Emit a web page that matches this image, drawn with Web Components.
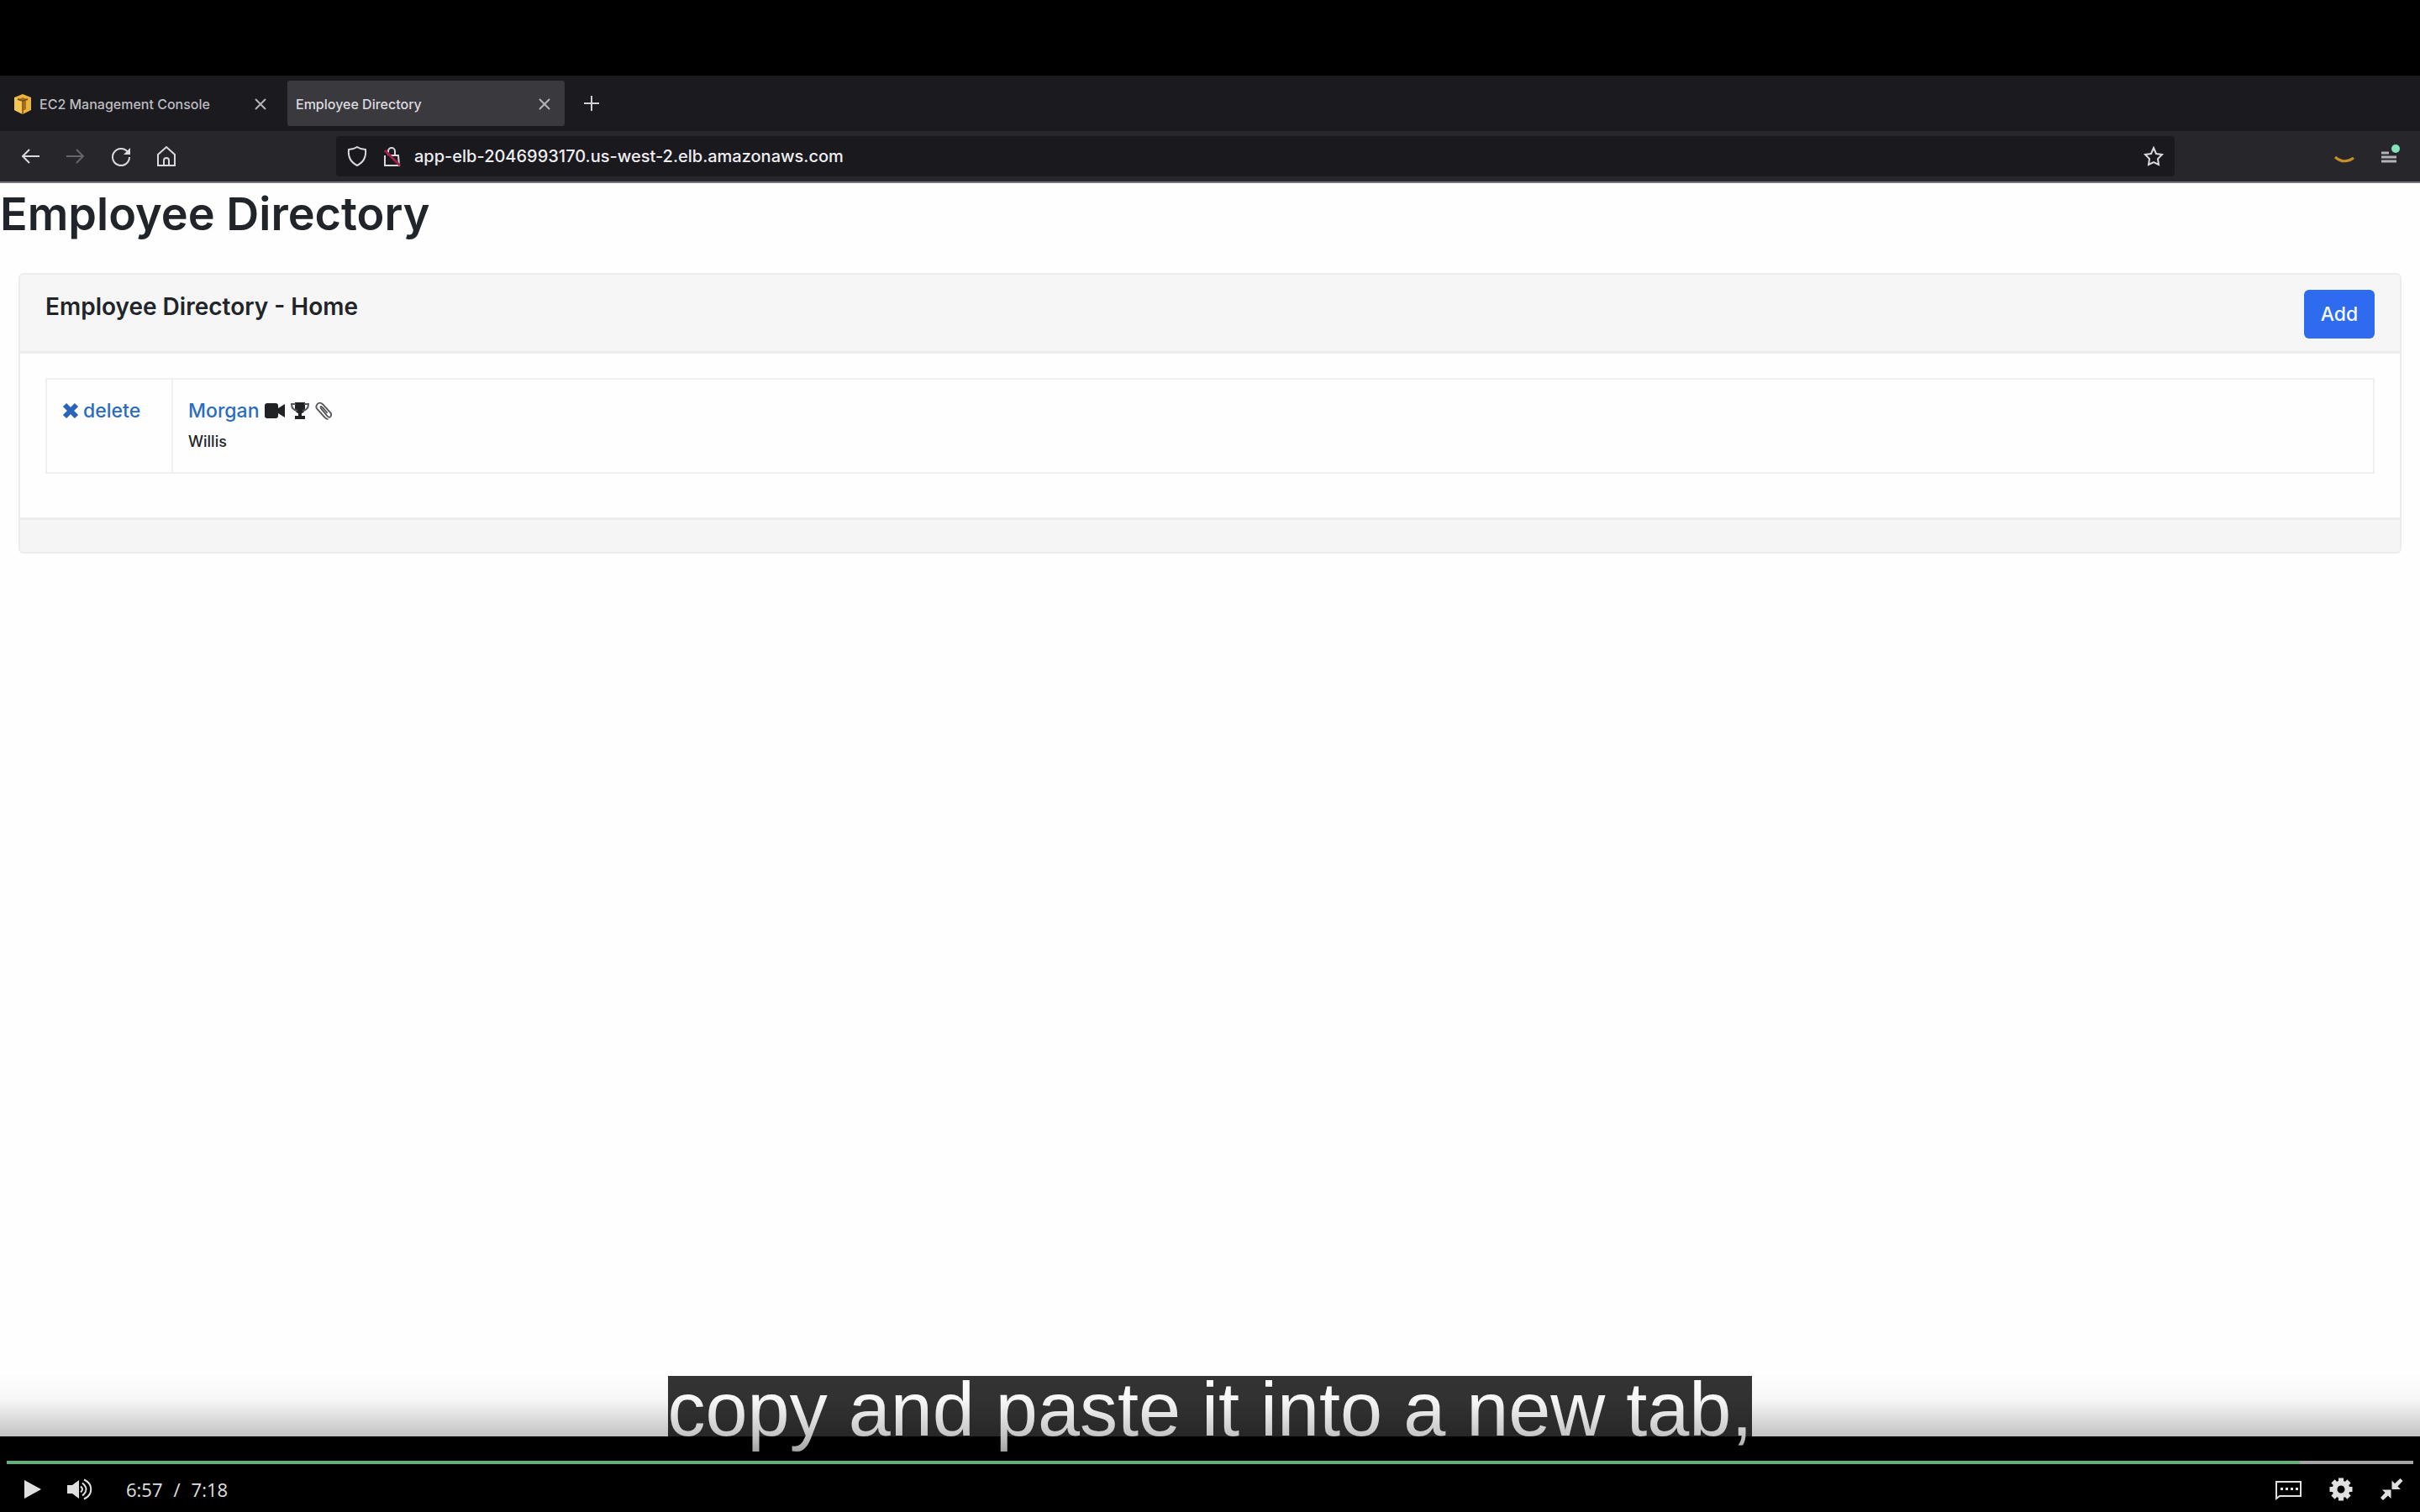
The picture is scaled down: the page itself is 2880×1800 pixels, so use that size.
<!DOCTYPE html>
<html lang="en">
<head>
<meta charset="utf-8">
<title>Employee Directory</title>
<style>
html,body{margin:0;background:#000}
body{font-family:Inter,"Liberation Sans",sans-serif}
</style>
</head>
<body>
<video-player>
  <browser-tabs slot="screen"></browser-tabs>
  <browser-toolbar slot="screen"></browser-toolbar>
  <directory-page slot="screen">
    <employee-card></employee-card>
  </directory-page>
  <caption-line slot="caption">copy and paste it into a new tab,</caption-line>
  <player-controls slot="controls"></player-controls>
</video-player>
<script>
const define = (name, html) => customElements.define(name, class extends HTMLElement {
  constructor() {
    super();
    this.attachShadow({ mode: "open" }).innerHTML = `<style>
      :host,*{box-sizing:border-box}
      button{font:inherit;color:inherit;background:none;border:0;padding:0;margin:0;display:flex;align-items:center;justify-content:center}
      a{text-decoration:none}
      svg{display:block}
    </style>` + html;
  }
});

define("video-player", `
<style>
:host{display:flex;flex-direction:column;min-height:100vh;background:#000;position:relative;overflow:hidden}
.screen{margin-top:90px;flex:1;background:#fefefe;display:flex;flex-direction:column}
.shade{position:absolute;left:0;right:0;bottom:0;height:166px;pointer-events:none;
  background:linear-gradient(rgba(0,0,0,0),rgba(0,0,0,.03) 32px,rgba(0,0,0,.11) 50px,rgba(0,0,0,.235) 76px,rgba(0,0,0,.36) 94px,rgba(0,0,0,.4))}
.caption{position:absolute;left:0;right:0;bottom:82px;display:flex;justify-content:center}
.controls{height:90px}
</style>
<div class="screen"><slot name="screen"></slot></div>
<div class="controls"></div>
<div class="caption"><slot name="caption"></slot></div>
<div class="shade"></div>
<slot name="controls"></slot>`);

define("browser-tabs", `
<style>
:host{display:flex;align-items:center;height:66px;background:#1b1a1f;color:#bdbcc1;font-size:16px;line-height:24px;font-weight:500}
.tab{display:flex;align-items:center;height:54px;width:330px;padding:2px 14px 0 10px;border-radius:3px}
.tab.first{width:342px;padding:2px 22px 0 15px;gap:8px}
.tab.on{background:#3a393e;color:#dddce0}
.tab span{flex:1}
.new{margin-left:22px}
</style>
<div class="tab first" role="tab">
  <svg width="24" height="26" viewBox="0 0 24 26"><path d="M12 1 22 5v15l-10 5L2 20V5z" fill="#e9b33c"/><path d="M8 7l4-2 4 2v12l-4 2-4-2z" fill="#a66d1c"/><path d="M2 5l10 3v17L2 20z" fill="#f3c653"/><path d="M12 8v17" stroke="#976318" stroke-width="2"/><path d="M6 7l6 2 6-2" stroke="#7b521b" stroke-width="2" fill="none"/></svg>
  <span>EC2 Management Console</span>
  <button aria-label="Close tab"><svg width="20" height="20" viewBox="0 0 20 20"><path d="M4 4l12 12M16 4 4 16" stroke="#b5b4b9" stroke-width="2"/></svg></button>
</div>
<div class="tab on" role="tab" aria-selected="true">
  <span>Employee Directory</span>
  <button aria-label="Close tab"><svg width="20" height="20" viewBox="0 0 20 20"><path d="M4 4l12 12M16 4 4 16" stroke="#b5b4b9" stroke-width="2"/></svg></button>
</div>
<button class="new" aria-label="New tab"><svg width="20" height="20" viewBox="0 0 20 20"><path d="M10 1v18M1 10h18" stroke="#d0cfd4" stroke-width="2"/></svg></button>`);

define("browser-toolbar", `
<style>
:host{display:flex;align-items:center;height:62px;background:#27262b;border-bottom:2px solid #77767a;padding:0 22px;color:#dad9dd}
.nav{display:flex;gap:26px;width:378px}
.url{flex:1;display:flex;align-items:center;height:48px;background:#1a191e;border-radius:4px;padding:0 11px;gap:13px}
input{flex:1;border:0;outline:0;background:none;color:#efeef2;font:500 20px/28px Inter,"Liberation Sans",sans-serif;padding:0}
.right{display:flex;width:270px;justify-content:flex-end;gap:26px;align-items:center}
svg{fill:none;stroke:currentColor;stroke-width:2}
</style>
<div class="nav">
  <button aria-label="Back"><svg width="28" height="28" viewBox="0 0 28 28"><path d="M25 14H5M13 6l-8 8 8 8"/></svg></button>
  <button aria-label="Forward"><svg width="28" height="28" viewBox="0 0 28 28" style="color:#67666b"><path d="M3 14h20M15 6l8 8-8 8"/></svg></button>
  <button aria-label="Reload"><svg width="28" height="28" viewBox="0 0 28 28"><path d="M22 9A10 10 0 1 0 24 15"/><path d="M25 4v8h-8z" fill="currentColor" stroke="none"/></svg></button>
  <button aria-label="Home"><svg width="28" height="28" viewBox="0 0 28 28"><path d="M4 12 14 3l10 9v13H4z"/><path d="M11 25v-6a3 3 0 0 1 6 0v6"/></svg></button>
</div>
<div class="url">
  <svg width="28" height="28" viewBox="0 0 28 28"><path d="M14 3c3 2 6 3 10 3 1 9-2 15-10 19C6 21 3 15 4 6c4 0 7-1 10-3z"/></svg>
  <svg width="28" height="28" viewBox="0 0 28 28"><path d="M10 13V8a4 4 0 0 1 8 0v5M12 13h10l1 12H6V13"/><path d="M6 7l18 18" stroke="#a3224c" stroke-width="3"/></svg>
  <input aria-label="Address" value="app-elb-2046993170.us-west-2.elb.amazonaws.com">
  <svg width="28" height="28" viewBox="0 0 28 28"><path d="M14 4l3 7 7 1-5 5 1 7-6-3-6 3 1-7-5-5 7-1z"/></svg>
</div>
<div class="right">
  <button aria-label="Amazon"><svg width="28" height="28" viewBox="0 0 28 28"><path d="M3 15c7 6 15 6 22 1" stroke="#c98f28" stroke-width="3"/></svg></button>
  <button aria-label="Menu"><svg width="28" height="28" viewBox="0 0 28 28"><path d="M4 10h9M4 15h18M4 20h18" stroke="#b3b2b6" stroke-width="3"/><circle cx="21" cy="5" r="5" fill="#83e3bb" stroke="none"/></svg></button>
</div>`);

define("directory-page", `
<style>
:host{display:block;color:#212529;padding:3px 22px 0}
h1{margin:0 -22px 36px;font-size:54px;line-height:68px;font-weight:600}
</style>
<h1>Employee Directory</h1>
<slot></slot>`);

define("employee-card", `
<style>
:host{display:block;border:2px solid #ececef;border-radius:6px;overflow:hidden}
header{display:flex;justify-content:space-between;align-items:flex-start;height:94px;padding:18px 30px;background:#f6f6f7;border-bottom:3px solid #ececef}
h2{margin:0;font-size:28px;line-height:40px;font-weight:600}
.add{width:84px;height:58px;background:#2f6bee;color:#f4f9ff;border-radius:6px;font-size:23px;font-weight:500}
.body{padding:29px 30px 52px}
table{width:100%;border-collapse:collapse;font-size:23px;line-height:36px;font-weight:500}
td{border:2px solid #f0f0f1;padding:19px 18px 17px;vertical-align:top;height:110px}
td:first-child{width:150px}
a,.name{display:flex;align-items:center}
a{color:#2a6cc0;gap:5px}
.name{gap:5px;color:#212224}
small{display:block;font-size:18px;line-height:38px}
footer{height:41px;background:#f5f5f6;border-top:3px solid #ececef}
</style>
<header><h2>Employee Directory - Home</h2><button class="add">Add</button></header>
<div class="body"><table><tr>
<td><a href="#"><svg width="20" height="20" viewBox="0 0 20 20"><path d="M3 3l14 14M17 3 3 17" stroke="#2a63ba" stroke-width="6"/></svg>delete</a></td>
<td><div class="name"><a href="#">Morgan</a>
<svg width="26" height="24" viewBox="0 0 26 24"><path d="M4 3h10q3 0 3 3v3l8-5v16l-8-5v3q0 3-3 3H4q-3 0-3-3V6q0-3 3-3z" fill="#212224"/></svg>
<svg width="24" height="24" viewBox="0 0 24 24"><path d="M6 2h12v7q0 5-4 6v3h4v4H6v-4h4v-3q-4-1-4-6z" fill="#212224"/><path d="M7 4H2q0 7 7 8M17 4h5q0 7-7 8" fill="none" stroke="#55565a" stroke-width="2"/></svg>
<svg width="22" height="24" viewBox="0 0 24 24"><path d="M8 8l9 11q3 3 4.500 0t-1-5L11 3.500Q7 0 4 3.500T4 10l9 10q2 3 5 3" fill="none" stroke="#55565a" stroke-width="2"/><path d="M8 8q0-3 3 0l6 7" fill="none" stroke="#55565a" stroke-width="2"/></svg>
</div><small>Willis</small></td>
</tr></table></div>
<footer></footer>`);

define("caption-line", `
<style>
:host{display:block;background:rgba(0,0,0,.8);color:#fff;font:90px/80px "Liberation Sans",Arial,sans-serif;white-space:nowrap}
</style><slot></slot>`);

define("player-controls", `
<style>
:host{display:flex;flex-direction:column;position:absolute;left:0;right:0;bottom:0;height:90px;padding:29px 8px 0;color:#e0e0e0}
input{appearance:none;display:block;width:100%;height:4px;margin:0;background:linear-gradient(to right,#62b27b 95.3%,#a5a5a5 95.3%)}
input::-webkit-slider-thumb{appearance:none;width:0;height:0}
.bar{display:flex;align-items:center;flex:1;padding:2px 10px 0 15px}
.time{display:flex;gap:13px;margin-left:36px;flex:1;font:22px/30px "Open Sans","Noto Sans",sans-serif}
.vol{margin-left:23px}
.end{display:flex;gap:28px}
</style>
<input type="range" aria-label="Seek" min="0" max="438" value="417">
<div class="bar">
  <button aria-label="Play"><svg width="32" height="32" viewBox="0 0 32 32"><path d="M6 5l20 11L6 27z" fill="currentColor"/></svg></button>
  <button class="vol" aria-label="Mute"><svg width="36" height="32" viewBox="0 0 36 32"><path d="M2 11h6l8-6v22l-8-6H2z" fill="currentColor"/><path d="M18 12.500q4 3.500 0 7M20 8.500q9 7.500 0 15M22 4.500c11 5 11 18 0 23" fill="none" stroke="currentColor" stroke-width="2"/></svg></button>
  <div class="time"><span>6:57</span><span>/</span><span>7:18</span></div>
  <div class="end">
  <button aria-label="Captions"><svg width="36" height="32" viewBox="0 0 36 32"><path d="M3 7h29v17H7l-4 3z" fill="none" stroke="currentColor" stroke-width="2"/><path d="M8 14h3v3H8zM14 14h3v3h-3zM20 14h3v3h-3zM26 14h3v3h-3z" fill="currentColor"/></svg></button>
  <button aria-label="Settings"><svg width="32" height="32" viewBox="-16 -16 32 32"><g fill="currentColor"><path fill-rule="evenodd" d="M0-10.500a10.500 10.500 0 1 0 .01 0zM0-4.500a4.500 4.500 0 1 1-.01 0z"/><path d="M-3-13.500h6V-8h-6zM-3 8h6v5.500h-6zM-13.500-3H-8v6h-5.500zM8-3h5.500v6H8z"/><path transform="rotate(45)" d="M-3-13.500h6V-8h-6zM-3 8h6v5.500h-6zM-13.500-3H-8v6h-5.500zM8-3h5.500v6H8z"/></g></svg></button>
  <button aria-label="Exit full screen"><svg width="32" height="32" viewBox="0 0 32 32"><path d="M16.500 5.500v10.500H27l-3.500-3.500L29.500 6 26.500 3l-6.500 6zM15.500 27V16.500H5l3.500 3.500L3 26l3 3 6-5.500z" fill="currentColor"/></svg></button>
  </div>
</div>`);
</script>
</body>
</html>
